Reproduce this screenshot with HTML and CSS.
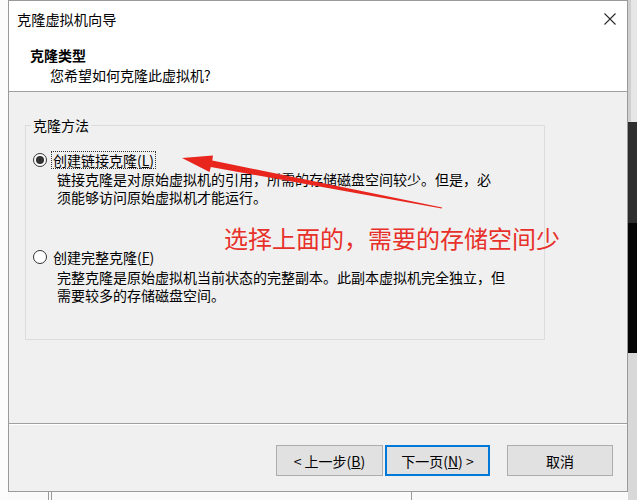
FILE: index.html
```html
<!DOCTYPE html>
<html lang="zh-CN">
<head>
<meta charset="utf-8">
<title>克隆虚拟机向导</title>
<link rel="stylesheet" href="styles.css">
</head>
<body>
<div class="screen">
  <div class="left-strip"></div>
  <div class="middle">
    <div class="dialog">
      <div class="header">
        <div class="titlebar">
          <span class="title">克隆虚拟机向导</span>
          <svg class="close" width="12" height="12" viewBox="0 0 12 12"><path d="M0.5 0.5L11.5 11.5M11.5 0.5L0.5 11.5" stroke="#2b2b2b" stroke-width="1.1" fill="none"/></svg>
        </div>
        <div class="heading">克隆类型</div>
        <div class="subheading">您希望如何克隆此虚拟机?</div>
      </div>
      <div class="content">
        <fieldset class="group">
          <legend>克隆方法</legend>
          <div class="option">
            <div class="row"><span class="radio checked"></span><span class="label focus">创建链接克隆(<u>L</u>)</span></div>
            <div class="desc">链接克隆是对原始虚拟机的引用，所需的存储磁盘空间较少。但是，必<br>须能够访问原始虚拟机才能运行。</div>
          </div>
          <div class="option second">
            <div class="row"><span class="radio"></span><span class="label">创建完整克隆(<u>F</u>)</span></div>
            <div class="desc">完整克隆是原始虚拟机当前状态的完整副本。此副本虚拟机完全独立，但<br>需要较多的存储磁盘空间。</div>
          </div>
        </fieldset>
      </div>
      <div class="footer">
        <button class="btn back">&lt; 上一步(<u>B</u>)</button>
        <button class="btn next">下一页(<u>N</u>) &gt;</button>
        <button class="btn cancel">取消</button>
      </div>
    </div>
    <div class="below"><span class="mark m1"></span><span class="mark m2"></span></div>
  </div>
  <div class="right-strip">
    <div class="rs rs1"></div>
    <div class="rs rs2"></div>
    <div class="rs rs3"></div>
    <div class="rs rs4"></div>
  </div>
  <svg class="arrow" width="637" height="500" viewBox="0 0 637 500">
    <polygon fill="#e8261e" points="182,158 213,155.5 212.3,160.5 442.2,207.4 441.8,208.6 210.8,167 209.5,172"/>
  </svg>
  <div class="annot">选择上面的，需要的存储空间少</div>
</div>
</body>
</html>
```

FILE: styles.css
```css
html, body {
  margin: 0;
  padding: 0;
}
body {
  font-family: "Noto Sans CJK SC", "Microsoft YaHei", sans-serif;
  font-size: 14px;
  color: #000;
  background: #fafafa;
}
.screen {
  position: relative;
  width: 637px;
  height: 500px;
  display: flex;
  overflow: hidden;
  background: #fafafa;
}
.left-strip {
  width: 8px;
  flex: none;
  background: #fcfcfc;
}
.middle {
  width: 620px;
  flex: none;
  display: flex;
  flex-direction: column;
}
.dialog {
  width: 620px;
  height: 492px;
  box-sizing: border-box;
  border: 1px solid #9a9a9a;
  background: #f0f0f0;
  display: flex;
  flex-direction: column;
}
.header {
  height: 90px;
  flex: none;
  background: #fff;
  border-bottom: 1px solid #a0a0a0;
}
.titlebar {
  display: flex;
  align-items: center;
  justify-content: space-between;
  padding: 8px 11px 0 8px;
  height: 20px;
  line-height: 20px;
}
.title {
  font-size: 14.2px;
}
.heading {
  margin-top: 16px;
  padding-left: 21px;
  line-height: 20px;
  font-weight: bold;
  font-size: 14px;
}
.subheading {
  padding-left: 41px;
  line-height: 20px;
}
.content {
  height: 331px;
  flex: none;
}
.group {
  margin: 24px 0 0 16px;
  padding: 0 0 0 7px;
  width: 520px;
  height: 224px;
  box-sizing: border-box;
  border: 1px solid #dcdcdc;
  min-width: 0;
}
.group legend {
  padding: 0 2px;
  margin-left: -2px;
  line-height: 18px;
}
.option {
  margin-top: 17px;
}
.option.second {
  margin-top: 42px;
}
.row {
  display: flex;
  align-items: center;
  height: 18px;
}
.radio {
  width: 14px;
  height: 14px;
  box-sizing: border-box;
  border: 1px solid #333;
  border-radius: 50%;
  background: #fff;
  flex: none;
  display: flex;
  align-items: center;
  justify-content: center;
}
.radio.checked::after {
  content: "";
  width: 8px;
  height: 8px;
  border-radius: 50%;
  background: #333;
}
.label {
  margin-left: 4px;
  padding: 0 1px;
  border: 1px dotted transparent;
  line-height: 16px;
  white-space: nowrap;
}
.label.focus {
  border-color: #333;
}
.desc {
  margin-top: 1px;
  padding-left: 24px;
  line-height: 18px;
  white-space: nowrap;
}
.second .desc {
  margin-top: 2px;
}
.footer {
  flex: 1;
  border-top: 1px solid #a0a0a0;
  box-shadow: inset 0 1px 0 #fff;
  display: flex;
  justify-content: flex-end;
  align-items: flex-start;
  padding: 21px 14px 0 0;
}
.btn {
  height: 31px;
  box-sizing: border-box;
  border: 1px solid #adadad;
  background: #e1e1e1;
  font-family: "Noto Sans CJK SC", "Microsoft YaHei", sans-serif;
  font-size: 14px;
  color: #000;
  padding: 0;
  margin: 0;
  line-height: 20px;
}
.back {
  width: 107px;
}
.next {
  width: 105px;
  margin-left: 2px;
  border: 2px solid #0078d7;
}
.cancel {
  width: 106px;
  margin-left: 17px;
}
.below {
  height: 8px;
  display: flex;
}
.mark {
  width: 2px;
  height: 8px;
  border-left: 1px solid #9a9a9a;
  border-right: 1px solid #9a9a9a;
}
.m1 {
  margin-left: 40px;
}
.m2 {
  margin-left: 359px;
  width: 0;
  border-right: none;
}
.right-strip {
  width: 9px;
  flex: none;
  display: flex;
  flex-direction: column;
}
.rs1 {
  height: 122px;
  background: #e6e6e6;
  box-shadow: inset 3px 0 0 #cfcfcf;
}
.rs2 {
  height: 101px;
  background: #2e2e2e;
}
.rs3 {
  height: 130px;
  background: #050505;
}
.rs4 {
  flex: 1;
  background: #d8d8d8;
}
.arrow {
  position: absolute;
  left: 0;
  top: 0;
  pointer-events: none;
}
.annot {
  position: absolute;
  left: 224px;
  top: 223px;
  font-size: 24px;
  line-height: 30px;
  color: #e8302a;
  white-space: nowrap;
}
```
